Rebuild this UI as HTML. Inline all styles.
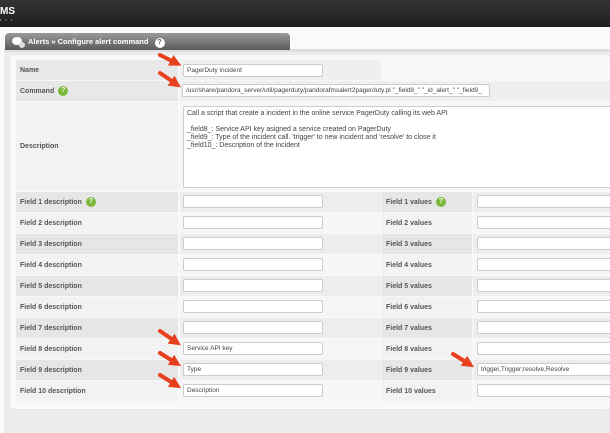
<!DOCTYPE html>
<html><head><style>
*{margin:0;padding:0;box-sizing:border-box}
body{width:610px;height:433px;overflow:hidden;background:#fafafa;font-family:"Liberation Sans",sans-serif;position:relative}
.top{position:absolute;left:0;top:0;width:610px;height:27px;background:linear-gradient(#333,#1f1f1f)}
.logo{position:absolute;left:0;top:6px;color:#fff;font-weight:bold;font-size:10px}
.tab{position:absolute;left:5px;top:33px;width:285px;height:17px;background:linear-gradient(#999,#5a5a5a);border-radius:4px 4px 0 0;color:#fff;font-weight:bold;font-size:7.5px;line-height:17px;padding-left:23px}
.line{position:absolute;left:4px;top:49px;width:606px;height:3px;background:#ddd}
.page{position:absolute;left:4px;top:52px;width:606px;height:381px;background:#ececec}
.panel{position:absolute;left:10px;top:55px;width:600px;height:354px;background:#f8f8f8;border-radius:3px;box-shadow:0 0 1px #ccc}
.c{position:absolute;font-size:7px;font-weight:bold;color:#555;padding-left:4px;display:flex;align-items:center}
.inp{position:absolute;background:#fff;border:1px solid #ccc;border-radius:2px;font-size:6.5px;color:#444;padding-left:3px;line-height:12px;height:13px;width:140px;white-space:nowrap;overflow:hidden}
.q{display:inline-block;width:10px;height:10px;border-radius:50%;background:#7bb83a;color:#fff;font-size:7px;text-align:center;line-height:10px;margin-left:4px}
</style></head><body>
<div class="top"><div class="logo">MS</div><div style="position:absolute;left:0;top:17px;color:#bbb;font-size:4px;letter-spacing:4px">▪▪▪</div></div>
<div class="line"></div><div class="page"></div>
<div class="tab"><svg style="position:absolute;left:6px;top:3px" width="14" height="12"><ellipse cx="6" cy="5" rx="5" ry="4" fill="#fff"/><circle cx="11" cy="9" r="3" fill="#ddd"/></svg>Alerts » Configure alert command <span class="q" style="background:#fff;color:#555">?</span></div>
<div class="panel"></div>
<div class="c" style="left:16px;top:60px;width:162px;height:20px;background:#e8e8e8">Name</div>
<div class="c" style="left:180px;top:60px;width:201px;height:20px;background:#efefef"></div>
<div class="inp" style="left:183px;top:64px">PagerDuty incident</div>
<div class="c" style="left:16px;top:81px;width:162px;height:20px;background:#e8e8e8">Command<span class="q">?</span></div>
<div class="c" style="left:180px;top:81px;width:430px;height:20px;background:#efefef"></div>
<div class="inp" style="left:182px;top:84px;width:308px">/usr/share/pandora_server/util/pagerduty/pandorafmsalert2pagerduty.pl "_field8_" "_id_alert_" "_field9_</div>
<div class="c" style="left:16px;top:102px;width:162px;height:88px;background:#f2f2f2">Description</div>
<div class="c" style="left:180px;top:102px;width:430px;height:88px;background:#f6f6f6"></div>
<div class="inp" style="left:183px;top:106px;width:440px;height:82px;line-height:8px;padding:3px;font-size:7px;white-space:pre">Call a script that create a incident in the online service PagerDuty calling its web API

_field8_: Service API key asigned a service created on PagerDuty
_field9_: Type of the incident call. 'trigger' to new incident and 'resolve' to close it
_field10_: Description of the incident</div>
<div id="f"></div>
<script>
var h='',vals={8:['Service API key',''],9:['Type','trigger,Trigger;resolve,Resolve'],10:['Description','']};
for(var i=1;i<=10;i++){var y=192+(i-1)*21,a=i%2?'#e6e6e6':'#f2f2f2',b=i%2?'#ededed':'#f6f6f6',q=i==1?'<span class="q">?</span>':'',v=vals[i]||['',''];
h+='<div class="c" style="left:16px;top:'+y+'px;width:162px;height:20px;background:'+a+'">Field '+i+' description'+q+'</div>'+
'<div class="c" style="left:180px;top:'+y+'px;width:201px;height:20px;background:'+b+'"></div>'+
'<div class="inp" style="left:183px;top:'+(y+3)+'px">'+v[0]+'</div>'+
'<div class="c" style="left:382px;top:'+y+'px;width:90px;height:20px;background:'+a+'">Field '+i+' values'+q+'</div>'+
'<div class="c" style="left:473px;top:'+y+'px;width:137px;height:20px;background:'+b+'"></div>'+
'<div class="inp" style="left:477px;top:'+(y+3)+'px;width:150px">'+v[1]+'</div>';}
document.getElementById('f').innerHTML=h;
</script>
<svg style="position:absolute;left:0;top:0" width="610" height="433">
<defs><marker id="m" markerWidth="3" markerHeight="3" refX="1.5" refY="1.5" orient="auto"><path d="M0,0 L3,1.5 L0,3z" fill="#e8401c"/></marker></defs>
<g stroke="#e8401c" stroke-width="4" stroke-linecap="round" marker-end="url(#m)">
<line x1="160" y1="55" x2="176" y2="63"/>
<line x1="160" y1="73" x2="176" y2="84"/>
<line x1="160" y1="331" x2="176" y2="342"/>
<line x1="160" y1="353" x2="176" y2="363"/>
<line x1="160" y1="375" x2="176" y2="385"/>
<line x1="453" y1="354" x2="469" y2="364"/>
</g></svg>
</body></html>
